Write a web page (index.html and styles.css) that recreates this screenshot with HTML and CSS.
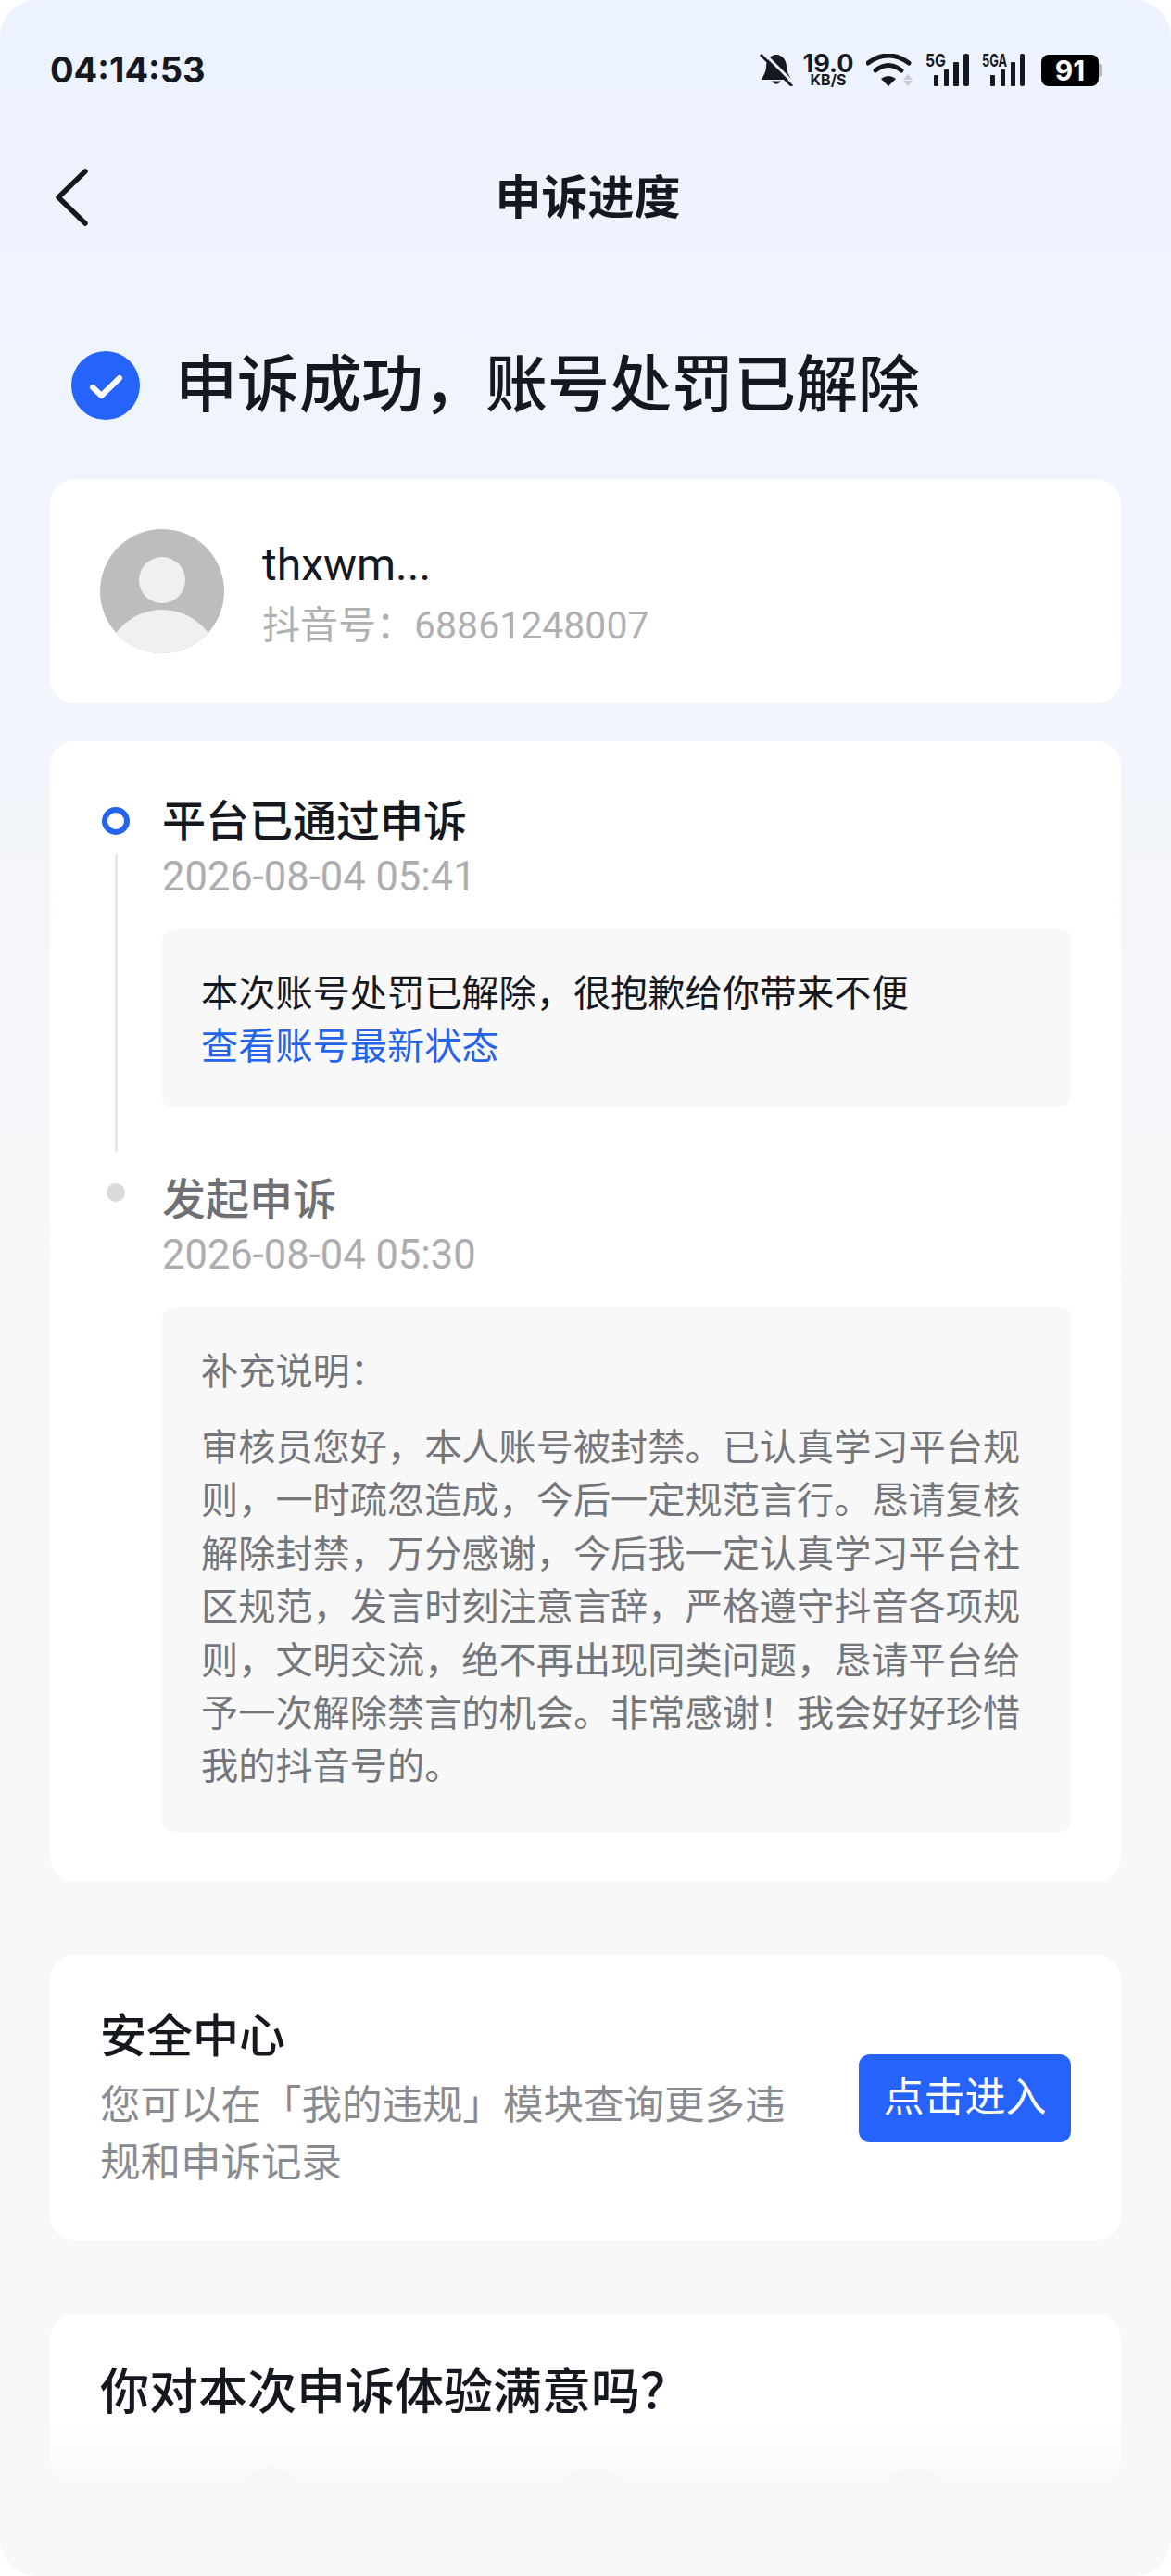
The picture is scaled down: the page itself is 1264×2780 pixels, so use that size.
FILE: index.html
```html
<!DOCTYPE html>
<html lang="zh-CN">
<head>
    <meta charset="UTF-8">
    <meta name="viewport" content="width=device-width, initial-scale=1.0">
    <title>申诉进度</title>
    <link rel="stylesheet" href="styles.css">
</head>
<body>
    <div class="screen">
        <div class="status-bar">
            <span class="time">04:14:53</span>
            <div class="status-icons">
                <svg class="bell" width="36" height="35" viewBox="0 0 36 35">
                    <path d="M18 1C11 1 7 8 7 14C7 20 4 23 2 28H34C32 23 29 20 29 14C29 8 25 1 18 1Z" fill="#16181f"/>
                    <path d="M13 29.500H23Q18 36 13 29.500Z" fill="#16181f"/>
                    <path d="M4 -1L37 32" stroke="#edf2fe" stroke-width="3"/>
                    <path d="M1 1L35 35" stroke="#16181f" stroke-width="3"/>
                </svg>
                <div class="net-speed">
                    <span class="speed-num">19.0</span>
                    <span class="speed-unit">KB/S</span>
                </div>
                <svg width="50" height="35" viewBox="0 0 50 35">
                    <path d="M2 10Q24 -6 46 10" fill="none" stroke="#16181f" stroke-width="5" stroke-linecap="round"/>
                    <path d="M10 18Q24 7 38 18" fill="none" stroke="#16181f" stroke-width="5" stroke-linecap="round"/>
                    <path d="M16 27Q24 21 32 27L24 35Z" fill="#16181f"/>
                    <path d="M40 28L45 22L50 28Z" fill="#c9cad0"/>
                    <path d="M40 29H50L45 35Z" fill="#c9cad0"/>
                </svg>
                <svg class="signal" width="47" height="41" viewBox="0 -6 47 41">
                    <text class="sig-label" x="0" y="14" textLength="22" lengthAdjust="spacingAndGlyphs">5G</text>
                    <rect x="9" y="23" width="5" height="12" rx="1" fill="#16181f"/>
                    <rect x="20" y="17" width="5" height="18" rx="1" fill="#16181f"/>
                    <rect x="30" y="9" width="6" height="26" rx="1" fill="#16181f"/>
                    <rect x="41" y="0" width="6" height="35" rx="2" fill="#16181f"/>
                </svg>
                <svg class="signal" width="47" height="41" viewBox="0 -6 47 41">
                    <text class="sig-label" x="0" y="14" textLength="27" lengthAdjust="spacingAndGlyphs">5GA</text>
                    <rect x="9" y="23" width="5" height="12" rx="1" fill="#16181f"/>
                    <rect x="20" y="17" width="5" height="18" rx="1" fill="#16181f"/>
                    <rect x="31" y="9" width="5" height="26" rx="1" fill="#16181f"/>
                    <rect x="41" y="0" width="5" height="35" rx="2" fill="#16181f"/>
                </svg>
                <div class="battery">
                    <span class="battery-body">91</span>
                    <span class="battery-cap"></span>
                </div>
            </div>
        </div>

        <div class="nav">
            <svg class="back" width="36" height="62" viewBox="0 0 36 62">
                <path d="M33 3L4 31L33 59" fill="none" stroke="#16181f" stroke-width="5.500" stroke-linecap="round" stroke-linejoin="round"/>
            </svg>
            <h1 class="nav-title">申诉进度</h1>
            <span></span>
        </div>

        <div class="result">
            <svg width="74" height="74" viewBox="0 0 74 74">
                <circle cx="37" cy="37" r="37" fill="#2563fb"/>
                <path d="M23 39L32.500 48L52 29" fill="none" stroke="#fff" stroke-width="6" stroke-linecap="round" stroke-linejoin="round"/>
            </svg>
            <h2 class="result-text">申诉成功，账号处罚已解除</h2>
        </div>

        <div class="card user-card">
            <svg class="avatar" width="134" height="134" viewBox="0 0 134 134">
                <defs>
                    <clipPath id="avatar-clip"><circle cx="67" cy="67" r="67"/></clipPath>
                </defs>
                <g clip-path="url(#avatar-clip)">
                    <rect width="134" height="134" fill="#bdbdbd"/>
                    <circle cx="67" cy="55" r="25" fill="#f0f0f0"/>
                    <circle cx="67" cy="149" r="62" fill="#f0f0f0"/>
                </g>
            </svg>
            <div class="user-info">
                <div class="user-name">thxwm...</div>
                <div class="user-id">抖音号：68861248007</div>
            </div>
        </div>

        <div class="card timeline">
            <div class="tl-item">
                <div class="tl-rail">
                    <span class="dot-active"></span>
                    <span class="tl-line"></span>
                </div>
                <div class="tl-content tl-first">
                    <div class="tl-title">平台已通过申诉</div>
                    <div class="tl-date">2026-08-04 05:41</div>
                    <div class="tl-box box-result">
                        <p>本次账号处罚已解除，很抱歉给你带来不便</p>
                        <a href="#" class="link">查看账号最新状态</a>
                    </div>
                </div>
            </div>
            <div class="tl-item">
                <div class="tl-rail">
                    <span class="dot-done"></span>
                </div>
                <div class="tl-content">
                    <div class="tl-title title-muted">发起申诉</div>
                    <div class="tl-date">2026-08-04 05:30</div>
                    <div class="tl-box box-note">
                        <p class="note-label">补充说明：</p>
                        <p class="note-text">审核员您好，本人账号被封禁。已认真学习平台规则，一时疏忽造成，今后一定规范言行。恳请复核解除封禁，万分感谢，今后我一定认真学习平台社区规范，发言时刻注意言辞，严格遵守抖音各项规则，文明交流，绝不再出现同类问题，恳请平台给予一次解除禁言的机会。非常感谢！我会好好珍惜我的抖音号的。</p>
                    </div>
                </div>
            </div>
        </div>

        <div class="card safety">
            <div class="safety-text">
                <div class="safety-title">安全中心</div>
                <div class="safety-desc">您可以在「我的违规」模块查询更多违规和申诉记录</div>
            </div>
            <a href="#" class="enter-btn">点击进入</a>
        </div>

        <div class="card survey">
            <div class="survey-title">你对本次申诉体验满意吗？</div>
            <div class="survey-faces">
                <span class="face"></span>
                <span class="face"></span>
                <span class="face"></span>
            </div>
        </div>

        <div class="bottom-fade"></div>
    </div>
</body>
</html>
```

FILE: styles.css
```css
* {
    box-sizing: border-box;
}
body {
    margin: 0;
    background-color: #fff;
    font-family: Roboto, "Noto Sans CJK SC", sans-serif;
    color: #16181f;
}
h1, h2, p {
    margin: 0;
    font-weight: inherit;
}
a {
    text-decoration: none;
}
.screen {
    position: relative;
    width: 1264px;
    height: 2780px;
    overflow: hidden;
    border-radius: 40px;
    background: linear-gradient(#ecf2ff 0, #f8f8f8 1500px);
}

/* status bar */
.status-bar {
    display: flex;
    justify-content: space-between;
    align-items: center;
    height: 35px;
    margin-top: 58px;
    padding: 0 74px 0 54px;
    font-family: Inter, sans-serif;
}
.time {
    font-size: 38px;
    font-weight: 700;
    line-height: 35px;
}
.status-icons {
    display: flex;
    align-items: center;
}
.status-icons svg {
    display: block;
    margin-left: 14px;
}
.status-icons .bell {
    margin-left: 0;
}
.status-icons .signal {
    margin-top: -6px;
}
.net-speed {
    display: flex;
    flex-direction: column;
    align-items: center;
    width: 54px;
    margin-left: 11px;
    font-weight: 700;
}
.speed-num {
    font-size: 27px;
    line-height: 21px;
}
.speed-unit {
    font-size: 16px;
    line-height: 14px;
}
.sig-label {
    font-size: 19px;
    font-weight: 700;
    fill: #16181f;
}
.battery {
    display: flex;
    align-items: center;
    margin-left: 17px;
}
.battery-body {
    width: 62px;
    height: 34px;
    border-radius: 8px;
    background-color: #000;
    color: #fff;
    font-size: 30px;
    font-weight: 700;
    line-height: 34px;
    text-align: center;
}
.battery-cap {
    width: 4px;
    height: 14px;
    border-radius: 0 3px 3px 0;
    background-color: #b9b9bd;
}

/* nav */
.nav {
    display: grid;
    grid-template-columns: 1fr auto 1fr;
    align-items: center;
    height: 100px;
    margin-top: 70px;
    padding: 0 54px 0 59px;
}
.nav-title {
    padding-top: 2px;
    font-size: 50px;
    font-weight: 700;
    line-height: 98px;
}

/* result heading */
.result {
    display: flex;
    align-items: center;
    gap: 38px;
    height: 100px;
    margin-top: 103px;
    padding-left: 77px;
}
.result-text {
    font-size: 67px;
    font-weight: 500;
    line-height: 100px;
}

.card {
    margin: 0 54px;
    border-radius: 26px;
    background-color: #fff;
}

/* user */
.user-card {
    display: flex;
    align-items: center;
    gap: 41px;
    height: 242px;
    margin-top: 51px;
    padding: 0 54px;
}
.user-info {
    padding-top: 8px;
}
.user-name {
    font-size: 48px;
    line-height: 60px;
}
.user-id {
    margin-top: 5px;
    color: #b0b0b3;
    font-size: 41px;
    line-height: 60px;
}

/* timeline */
.timeline {
    margin-top: 41px;
    padding: 55px 54px 53px;
}
.tl-item {
    display: grid;
    grid-template-columns: 34px 1fr;
    column-gap: 33px;
}
.tl-rail {
    display: flex;
    flex-direction: column;
    align-items: center;
}
.dot-active {
    width: 30px;
    height: 30px;
    margin-top: 16px;
    border: 6px solid #2563eb;
    border-radius: 50%;
}
.dot-done {
    width: 20px;
    height: 20px;
    margin-top: 14px;
    border-radius: 50%;
    background-color: #dadadc;
}
.tl-line {
    flex: 1;
    width: 3px;
    margin: 21px 0 20px;
    background-color: #e8e8e9;
}
.tl-first {
    padding-bottom: 68px;
}
.tl-title {
    font-size: 47px;
    font-weight: 500;
    line-height: 64px;
}
.title-muted {
    color: #6f7076;
}
.tl-date {
    color: #adadb0;
    font-size: 43.500px;
    line-height: 56px;
}
.tl-box {
    margin-top: 28px;
    border-radius: 12px;
    background-color: #f8f8f8;
    font-size: 40.200px;
}
.box-result {
    padding: 41px 42px 37px;
    line-height: 57px;
}
.link {
    color: #2463eb;
}
.box-note {
    padding: 41px 42px 41px;
    color: #75767b;
}
.note-label {
    line-height: 57px;
}
.note-text {
    margin-top: 25px;
    line-height: 57.400px;
}

/* safety center */
.safety {
    display: flex;
    justify-content: space-between;
    align-items: center;
    height: 307px;
    margin-top: 80px;
    padding: 0 54px;
}
.safety-text {
    width: 770px;
    padding-top: 6px;
}
.safety-title {
    font-size: 50px;
    font-weight: 500;
    line-height: 64px;
}
.safety-desc {
    margin-top: 12px;
    color: #8a8b90;
    font-size: 43.500px;
    line-height: 62px;
}
.enter-btn {
    width: 229px;
    height: 95px;
    margin-top: 2px;
    border-radius: 12px;
    background-color: #2563fb;
    color: #fff;
    font-size: 44px;
    line-height: 95px;
    text-align: center;
}

/* survey, fades out at the bottom of the shot */
.survey {
    height: 182px;
    margin-top: 81px;
    padding: 49px 54px 0;
    overflow: hidden;
}
.survey-title {
    font-size: 53px;
    font-weight: 500;
    line-height: 70px;
}
.survey-faces {
    display: grid;
    grid-template-columns: repeat(3, 347px);
    justify-content: center;
    justify-items: center;
    margin-top: 46px;
    padding-left: 14px;
}
.face {
    width: 76px;
    height: 76px;
    border-radius: 50%;
    background-color: #efefef;
}
.bottom-fade {
    position: absolute;
    left: 0;
    right: 0;
    top: 2610px;
    bottom: 0;
    background: linear-gradient(rgba(248, 248, 248, 0) 0, rgba(248, 248, 248, 0.3) 30px, rgba(248, 248, 248, 0.8) 60px, #f8f8f8 74px);
}
```
